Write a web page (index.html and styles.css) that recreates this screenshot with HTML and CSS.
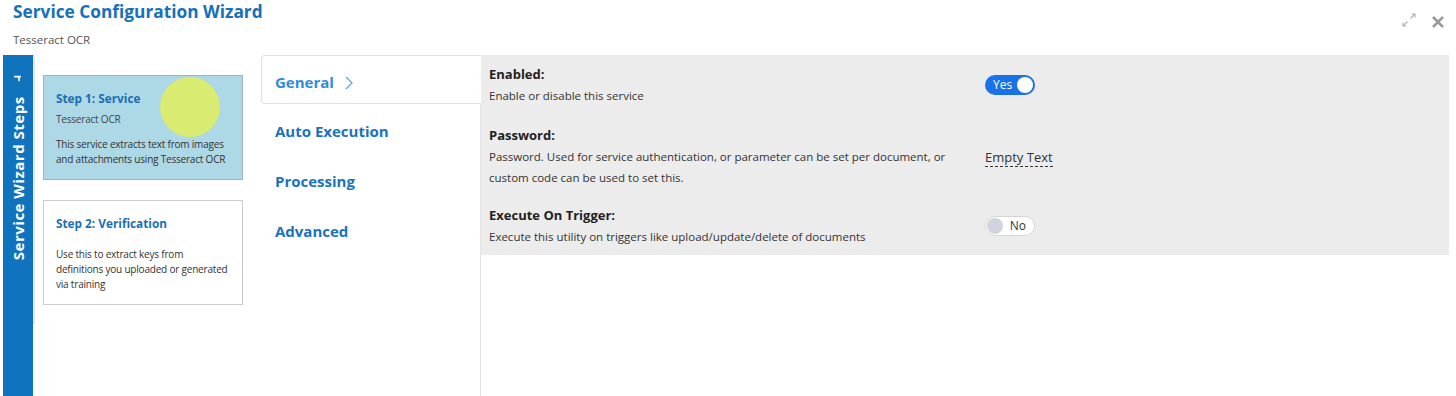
FILE: index.html
```html
<!DOCTYPE html>
<html lang="en">
<head>
  <meta charset="UTF-8">
  <title>Service Configuration Wizard</title>
  <link rel="stylesheet" href="styles.css">
</head>
<body>
  <header class="wizard-header">
    <div class="titles">
      <h1>Service Configuration Wizard</h1>
      <p class="subtitle">Tesseract OCR</p>
    </div>
    <div class="window-tools">
      <!-- expand -->
      <svg class="tool-expand" width="16" height="16" viewBox="0 0 16 16">
        <path d="M9.5 6.5 L14 2 M10.5 2 H14 V5.5 M6.5 9.5 L2 14 M2 10.5 V14 H5.5" fill="none" stroke="#a9b6c4" stroke-width="1.2"/>
      </svg>
      <!-- close -->
      <svg class="tool-close" width="14" height="14" viewBox="0 0 14 14">
        <path d="M2 2 L12 12 M12 2 L2 12" stroke="#9a9a9a" stroke-width="2.6"/>
      </svg>
    </div>
  </header>

  <main class="wizard-body">
    <aside class="steps-rail">
      <div class="rail-label">
        Service Wizard Steps
        <svg class="pin" width="8" height="9" viewBox="0 0 8 9">
          <path d="M1 5.5 H8 M3 1 V5.5" stroke="#fff" stroke-width="1.6"/>
        </svg>
      </div>
    </aside>
    <div class="rail-track"></div>

    <section class="steps-list">
      <div class="step-card active">
        <span class="cursor-dot"></span>
        <h3>Step 1: Service</h3>
        <p class="step-sub">Tesseract OCR</p>
        <p class="step-desc">This service extracts text from images and attachments using Tesseract OCR</p>
      </div>
      <div class="step-card">
        <h3>Step 2: Verification</h3>
        <p class="step-desc no-sub">Use this to extract keys from definitions you uploaded or generated via training</p>
      </div>
    </section>

    <nav class="tab-list">
      <a class="tab active">General
        <svg class="chev" width="8" height="14" viewBox="0 0 8 14">
          <path d="M1 1 L7 7 L1 13" fill="none" stroke="#5aa6e6" stroke-width="1.3"/>
        </svg>
      </a>
      <a class="tab">Auto Execution</a>
      <a class="tab">Processing</a>
      <a class="tab">Advanced</a>
    </nav>

    <section class="tab-panel">
      <div class="settings">
        <div class="setting first">
          <div class="setting-info">
            <div class="setting-label">Enabled:</div>
            <div class="setting-desc">Enable or disable this service</div>
          </div>
          <div class="setting-control">
            <span class="toggle on"><span class="toggle-text">Yes</span><span class="knob"></span></span>
          </div>
        </div>
        <div class="setting">
          <div class="setting-info">
            <div class="setting-label">Password:</div>
            <div class="setting-desc">Password. Used for service authentication, or parameter can be set per document, or custom code can be used to set this.</div>
          </div>
          <div class="setting-control">
            <span class="editable">Empty Text</span>
          </div>
        </div>
        <div class="setting">
          <div class="setting-info">
            <div class="setting-label">Execute On Trigger:</div>
            <div class="setting-desc">Execute this utility on triggers like upload/update/delete of documents</div>
          </div>
          <div class="setting-control">
            <span class="toggle off"><span class="knob"></span><span class="toggle-text">No</span></span>
          </div>
        </div>
      </div>
    </section>
  </main>
</body>
</html>
```

FILE: styles.css
```css
* {
  margin: 0;
  padding: 0;
  box-sizing: border-box;
}
html, body {
  height: 100%;
}
body {
  font-family: 'Open Sans', 'Noto Sans', sans-serif;
  background-color: #ffffff;
  color: #333;
  display: flex;
  flex-direction: column;
  overflow: hidden;
}

/* Cabeçalho */
.wizard-header {
  display: flex;
  justify-content: space-between;
  height: 55px;
  padding: 0 11px 0 13px;
}
.wizard-header h1 {
  font-size: 17.3px;
  line-height: 24px;
  font-weight: 700;
  color: #1670bb;
}
.subtitle {
  margin-top: 8px;
  font-size: 11.5px;
  color: #555;
}
.window-tools {
  display: flex;
  align-items: center;
  gap: 14px;
  height: 40px;
}
.tool-close {
  margin-top: 4px;
}

/* Corpo */
.wizard-body {
  flex: 1;
  display: flex;
  padding-left: 3px;
  padding-right: 7px;
}
.steps-rail {
  width: 30px;
  background-color: #0f73bd;
  display: flex;
  flex-direction: column;
  align-items: center;
  padding-top: 18px;
}
.rail-label {
  writing-mode: vertical-rl;
  transform: rotate(180deg);
  color: #fff;
  font-weight: 700;
  font-size: 15px;
  letter-spacing: 0.5px;
  white-space: nowrap;
}
.rail-label .pin {
  margin-top: 10px;
}
.rail-track {
  width: 2px;
  height: 269px;
  background-color: #e4e6ea;
}

.steps-list {
  padding: 20px 0 0 8px;
  display: flex;
  flex-direction: column;
  gap: 20px;
}
.step-card {
  position: relative;
  width: 200px;
  height: 105px;
  border: 1px solid #cccccc;
  padding: 13px 12px 0 12px;
  background-color: #fff;
}
.step-card.active {
  background-color: #add8e6;
  border-color: #9fb4c0;
}
.step-card h3 {
  font-size: 11.8px;
  line-height: 18px;
  font-weight: 700;
  color: #1a6fb6;
  position: relative;
}
.step-sub {
  margin-top: 4px;
  font-size: 10px;
  letter-spacing: -0.2px;
  line-height: 16px;
  color: #444;
  position: relative;
}
.step-desc {
  margin-top: 10px;
  font-size: 10px;
  letter-spacing: -0.2px;
  line-height: 15px;
  color: #333;
  position: relative;
}
.step-desc.no-sub {
  margin-top: 15px;
}
.cursor-dot {
  position: absolute;
  left: 116px;
  top: 1px;
  width: 60px;
  height: 60px;
  border-radius: 50%;
  background-color: #d9eb70;
}

/* Abas */
.tab-list {
  width: 220px;
  margin-left: 18px;
  border-right: 1px solid #e3e3e3;
}
.tab {
  display: flex;
  align-items: center;
  gap: 11px;
  height: 50px;
  padding: 4px 0 0 14px;
  font-size: 15px;
  font-weight: 700;
  color: #1a72be;
  cursor: pointer;
}
.tab.active {
  height: 49px;
  color: #2b8ce0;
  border: 1px solid #dde1e8;
  border-right: none;
  border-radius: 4px 0 0 4px;
  margin-right: -1px;
  background-color: #fff;
  padding-left: 13px;
}
.tab.active .chev {
  margin-top: 2px;
}

/* Painel */
.tab-panel {
  flex: 1;
}
.settings {
  background-color: #ececec;
}
.setting {
  display: flex;
  align-items: center;
  padding: 8px 8px 8px 8px;
}
.setting.first {
  padding-bottom: 10px;
}
.setting-info {
  width: 466px;
  margin-right: 30px;
}
.setting-label {
  font-size: 13px;
  line-height: 22px;
  font-weight: 700;
  color: #222;
}
.setting-desc {
  font-size: 11.5px;
  line-height: 21px;
  color: #333;
}
.editable {
  font-size: 13px;
  line-height: 18px;
  color: #333;
  border-bottom: 1px dashed #333;
  margin-bottom: 6px;
}
.toggle {
  display: flex;
  align-items: center;
  justify-content: space-between;
  width: 50px;
  height: 20px;
  border-radius: 10px;
  padding: 0 2px 0 8px;
  font-size: 12px;
}
.toggle.on {
  background-color: #1a72e8;
  color: #fff;
}
.toggle.off {
  background-color: #fff;
  border: 1px solid #d5d5d5;
  padding: 0 8px 0 1px;
  color: #333;
}
.knob {
  width: 16px;
  height: 16px;
  border-radius: 50%;
  background-color: #fff;
}
.toggle.off .knob {
  background-color: #d0d5dd;
}
```
